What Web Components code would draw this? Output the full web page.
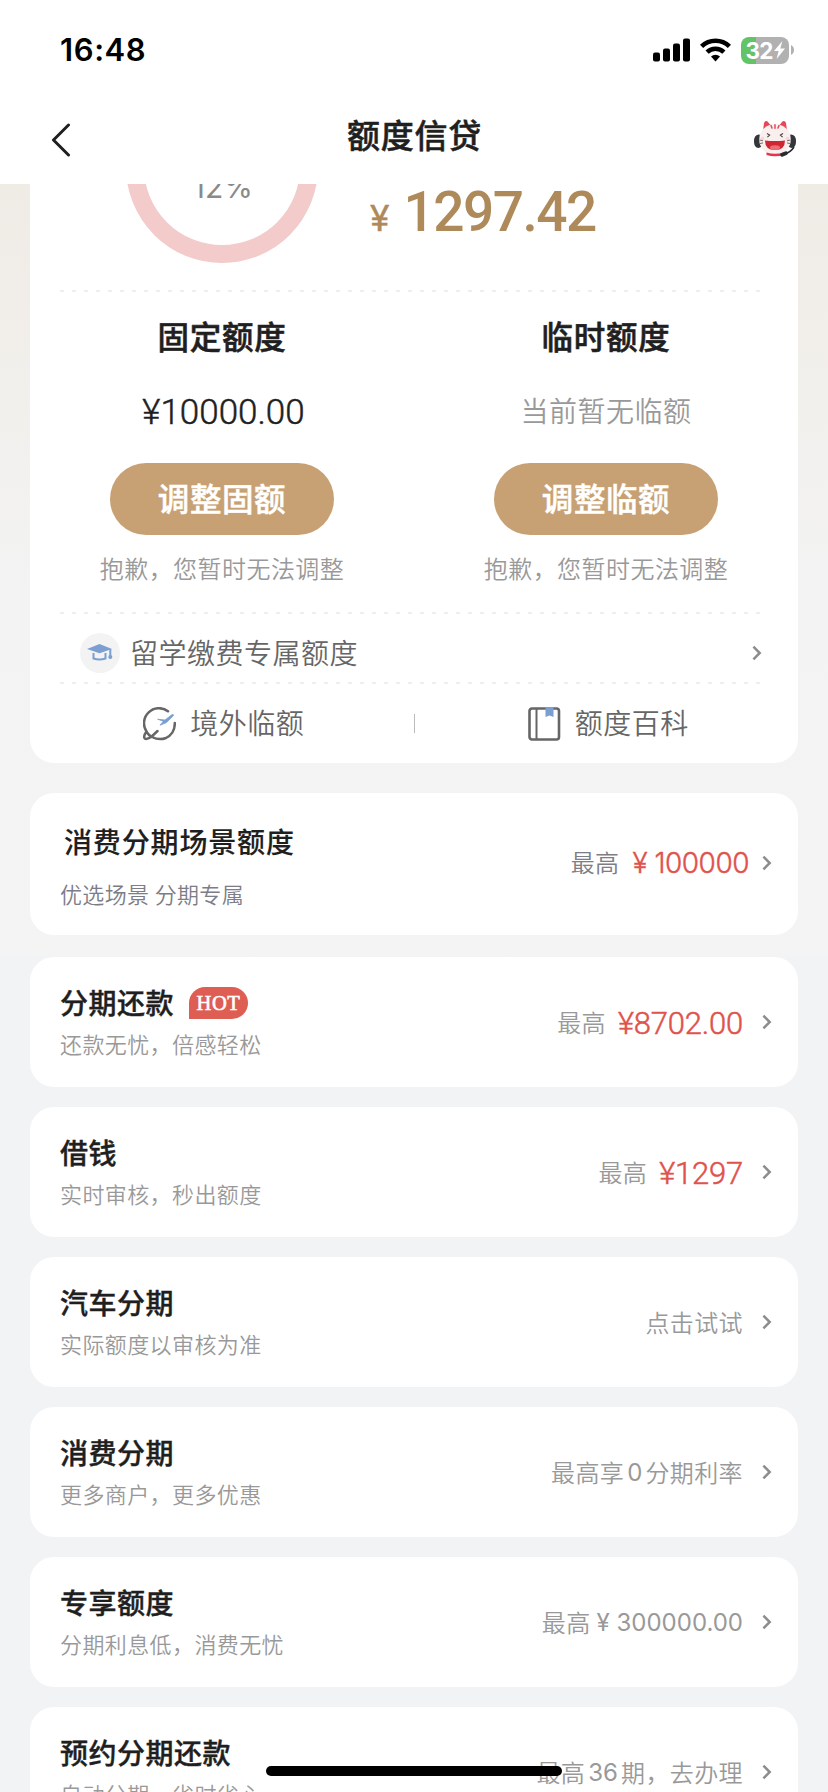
<!DOCTYPE html>
<html lang="zh-CN">
<head>
<meta charset="utf-8">
<title>额度信贷</title>
<style>
html,body{margin:0;padding:0}
body{width:828px;height:1792px;overflow:hidden;background:#f2f3f5;font-family:"Noto Sans CJK SC","Noto Sans",sans-serif;color:#1f1f1f}
</style>
</head>
<body>
<credit-app></credit-app>
<script>
const define=(name,html)=>{
  const t=document.createElement('template');t.innerHTML=html;
  customElements.define(name,class extends HTMLElement{
    constructor(){super();this.attachShadow({mode:'open'}).append(t.content.cloneNode(true));}
  });
};

define('chevron-icon',`<style>:host{display:block;width:10px;height:16px}svg{display:block}</style>
<svg width="10" height="16" viewBox="0 0 10 16" fill="none" stroke="#8d8d8d" stroke-width="2.5"><path d="M1.400 1.700 7.700 8 1.400 14.300"/></svg>`);

define('dash-line',`<style>:host{display:block;height:2px;margin:0 38px 0 30px;background:repeating-linear-gradient(90deg,#eee 0 4px,transparent 4px 12px)}</style>`);

define('status-bar',`<style>
:host{display:flex;height:100px;justify-content:space-between;align-items:center;padding:0 34px 0 60px;box-sizing:border-box}
.time{font:600 31px/36px Inter,sans-serif;color:#000;letter-spacing:.6px}
.icons{display:flex;align-items:center;gap:10px}
svg{display:block}
.bat{display:flex;align-items:center;gap:2px}
.body{width:48px;height:27px;border-radius:8px;background:linear-gradient(90deg,#62c466 15px,#b1b1b1 15px);display:flex;align-items:center;justify-content:center;gap:1px;color:#fff;font:700 22.5px/27px Inter,sans-serif;letter-spacing:-.8px}
</style>
<span class="time">16:48</span>
<div class="icons">
<svg width="37" height="24" viewBox="0 0 37 24"><rect y="14.5" width="7" height="9" rx="2"/><rect x="10" y="10.5" width="7" height="13" rx="2"/><rect x="20" y="5.5" width="7" height="18" rx="2"/><rect x="30" y=".5" width="7" height="23" rx="2"/></svg>
<svg width="31" height="24" viewBox="0 0 31 24"><g fill="none" stroke="#000" stroke-width="4.6"><path d="M1.6 8.4a20 20 0 0 1 27.8 0"/><path d="M7.1 14.1a12.2 12.2 0 0 1 16.8 0"/></g><path d="M11 18.6a6.6 6.6 0 0 1 9 0L15.5 23.4z"/></svg>
<div class="bat"><div class="body"><span>32</span><svg width="11" height="18" viewBox="0 0 11 18" fill="#fff"><path d="M8.4 0 0 10h4.6L2.6 18 11 7.6H6.3z"/></svg></div>
<svg width="3" height="10" viewBox="0 0 3 10" fill="#b1b1b1"><path d="M0 0q3 1.6 3 5t-3 5z"/></svg></div>
</div>`);

define('cat-icon',`<style>:host{display:block;width:44px;height:38px}svg{display:block}</style>
<svg width="44" height="38" viewBox="0 0 44 38">
<path d="M5.500 14.500Q1 15 1 21.500T5.500 28L8 27V15zM38.500 14.500Q43 15 43 21.500T38.500 28L36 27V15z" fill="#34363a"/>
<path d="M10 11 11 3Q12 .2 14.600 1.400L19 7zM34 11 33 3Q32 .2 29.400 1.400L25 7z" fill="#e8475a"/>
<ellipse cx="22" cy="19.500" rx="15.800" ry="15.500" fill="#f7f0ee"/>
<path d="M18 5.500l1 2.600M22 4.800v3.500M26 5.500l-1 2.600" stroke="#e8475a" stroke-width="1.500" stroke-linecap="round"/>
<path d="M41 27q-3 5-10 7.500" stroke="#26282b" stroke-width="1.500" fill="none"/>
<path d="M13.500 32.500q8.500 2.500 17 0v2.500q-8.500 2.400-17 0z" fill="#e6324a"/><rect x="27" y="32" width="8" height="4" rx="2" transform="rotate(-22 31 34)" fill="#2a2c2f"/>
<path d="m14 13.500 2.600 1.600-2.200 2M30 13.500l-2.600 1.600 2.200 2" fill="none" stroke="#4a3a3c" stroke-width="1.100"/>
<path d="M12 20.500q10 1 20 0 0 9.500-10 9.500t-10-9.500z" fill="#cf2634"/><ellipse cx="22" cy="27.600" rx="5" ry="2.400" fill="#ee6d74"/>
<circle cx="9.500" cy="18.500" r="1.800" fill="#fbd3d5"/><circle cx="34.500" cy="18.500" r="1.800" fill="#fbd3d5"/>
<path d="M6.500 20l3.500.8M7 23.500l3-.6M37.500 20l-3.500.8M37 23.500l-3-.6" stroke="#55484a" stroke-width=".8"/>
</svg>`);

define('nav-bar',`<style>
:host{display:grid;grid-template-columns:1fr auto 1fr;height:84px;align-items:center;padding:0 31px 10px 51px;box-sizing:border-box}
h1{margin:-6px 0 0 -19px;font-size:33px;line-height:46px;font-weight:500;letter-spacing:.7px;-webkit-text-stroke:.5px}
svg{display:block;margin-top:6px}cat-icon{justify-self:end;margin-top:4px}
</style>
<svg width="22" height="34" viewBox="0 0 22 34" fill="none" stroke="#1f1f1f" stroke-width="3" stroke-linecap="round" stroke-linejoin="round"><path d="M17.500 2 2.500 17l15 15"/></svg>
<h1><slot></slot></h1><cat-icon></cat-icon>`);

define('usage-ring',`<style>
:host{display:flex;width:192px;height:192px;box-sizing:border-box;border:18px solid #f2cbca;border-radius:50%;align-items:center;justify-content:center;font:400 30px/40px Inter,sans-serif;color:#8a8a8a;letter-spacing:.2px;padding:39px 0 0 2px}
</style><slot></slot>`);

define('limit-column',`<style>
:host{display:flex;flex:1;flex-direction:column;align-items:center;height:320px;box-sizing:border-box;padding-top:20px}
.title{font-size:31.500px;line-height:46px;font-weight:500;letter-spacing:.7px;-webkit-text-stroke:.6px}
.value{height:50px;margin-top:27px;line-height:50px;display:flex;align-items:center}
.btn{width:224px;height:72px;border-radius:36px;background:#c7a174;color:#fff;font-size:31.500px;font-weight:500;line-height:69px;text-align:center;margin-top:28px;letter-spacing:.6px;-webkit-text-stroke:.5px}
.note{margin-top:15px;font-size:24px;line-height:36px;color:#999;letter-spacing:.45px;font-weight:350}
</style>
<div class="title"><slot name="title"></slot></div><div class="value"><slot></slot></div><div class="btn"><slot name="action"></slot></div><div class="note">抱歉，您暂时无法调整</div>`);

define('limit-card',`<style>
:host{display:block;background:#fff;border-radius:0 0 24px 24px;margin:-124px 30px 0;height:703px}
.top{height:230px;display:flex;padding-left:96px;box-sizing:border-box}
usage-ring{margin-top:11px;flex:none}
.sum{display:flex;align-items:baseline;margin:119px 0 0 52px;color:#ae8a5b;line-height:66px;height:66px}
.yen{font:400 37px/50px Roboto,sans-serif;-webkit-text-stroke:.3px}
.num{font:500 55px/66px Roboto,sans-serif;margin-left:14px;letter-spacing:-1.500px}
.cols{display:flex}
.study{height:68px;display:flex;align-items:center;padding:9px 36px 0 50px;box-sizing:border-box}
.round{width:40px;height:40px;border-radius:50%;background:#f3f3f4;display:flex;align-items:center;justify-content:center}
svg{display:block}
.txt{font-size:28px;line-height:40px;color:#666;letter-spacing:.5px;font-weight:350;margin-top:-2px}
.study .txt{flex:1;margin-left:10px}
.foot{height:79px;display:flex;align-items:center}
.foot .txt{margin-top:-4px}
.half{flex:1;display:flex;justify-content:center;align-items:center;gap:14px;padding-left:4px}
.sep{width:1px;height:19px;background:#bbb}
.v1{font:300 35px/50px Roboto,sans-serif;letter-spacing:0;padding:5px 0 0 3px;-webkit-text-stroke:.5px}
.v2{font-size:28px;color:#999;letter-spacing:.5px;font-weight:350;margin-top:-1px}
</style>
<div class="top"><usage-ring>12%</usage-ring><div class="sum"><span class="yen">¥</span><span class="num">1297.42</span></div></div>
<dash-line></dash-line>
<div class="cols">
<limit-column><span slot="title">固定额度</span><span class="v1">¥10000.00</span><span slot="action">调整固额</span></limit-column>
<limit-column><span slot="title">临时额度</span><span class="v2">当前暂无临额</span><span slot="action">调整临额</span></limit-column>
</div>
<dash-line></dash-line>
<div class="study"><span class="round"><svg width="26" height="18" viewBox="0 0 26 18"><path d="M0 5 12.500 0 25 5 12.500 9.300z" fill="#7b9fd0"/><path d="M6.500 9v5.500q6 2 12 0V9M23.300 5v8" fill="none" stroke="#7b9fd0" stroke-width="2"/><circle cx="23.300" cy="13" r="2" fill="#7b9fd0"/></svg></span><span class="txt">留学缴费专属额度</span><chevron-icon></chevron-icon></div>
<dash-line></dash-line>
<div class="foot">
<div class="half"><svg width="33" height="34" viewBox="0 0 33 34" fill="none" stroke="#666" stroke-width="2.500" stroke-linecap="round"><path d="M25 4.200A15 15 0 0 0 3.500 24.500Q0 29.500 1.800 31.500 4 33 9 29.200L14.500 24"/><path d="M4 25.500q2 3.200 5 4.500Q16 33.600 23 31 32 26.500 31.800 16"/><path d="M15 12.300l7 .7 6.800-5.200q1.800-.8 1.800.6L23.500 15.600l-6.500 2.600 3.200-3.800z" fill="#7b9fd0" stroke="#7b9fd0" stroke-width=".8"/></svg><span class="txt">境外临额</span></div>
<span class="sep"></span>
<div class="half"><svg width="33" height="34" viewBox="0 0 33 34"><rect x="1.500" y="1.500" width="29.500" height="31" rx="2.500" fill="none" stroke="#666" stroke-width="2.600"/><path d="M8.500 1.500v31" stroke="#666" stroke-width="2"/><path d="M17.500 0h8v10l-4-1.500-4 1.500z" fill="#7b9fd0"/></svg><span class="txt">额度百科</span></div>
</div>`);

define('hot-badge',`<style>:host{display:block;width:59px;height:32px;background:#df5e54;border-radius:16px 16px 16px 0;color:#fff;font:400 20.500px/33px "Liberation Serif",serif;text-align:center;letter-spacing:.6px;-webkit-text-stroke:.6px #fff}</style><slot></slot>`);

define('offer-row',`<style>
:host{display:flex;height:130px;box-sizing:border-box;background:#fff;border-radius:24px;margin:0 30px 20px;padding:25px 26px 0 30px;justify-content:space-between}
.title{display:flex;align-items:center;gap:15px;font-size:28px;font-weight:500;line-height:38px;height:40px;letter-spacing:.5px;-webkit-text-stroke:.4px}
.title ::slotted(hot-badge){margin-top:1px;letter-spacing:.6px}
.sub{font-size:22px;line-height:32px;margin-top:5px;color:#999;letter-spacing:.4px;font-weight:350}
.right{display:flex;align-items:center;height:40px;margin-top:19px;color:#999;font-size:24px;letter-spacing:.4px;font-weight:350}
chevron-icon{margin-left:19px;margin-top:2px}
:host([scene]){height:142px;margin-bottom:22px;margin-top:30px;padding-top:28px}
:host([scene]) .title{margin-left:4px;letter-spacing:.85px;-webkit-text-stroke:.1px}
:host([scene]) .sub{margin-top:16px;color:#7d7d87;letter-spacing:.35px}
:host([scene]) .right{margin-top:20px;color:#7d7d87}
:host([scene]) chevron-icon{margin-left:13px;margin-top:3px}
</style>
<div><div class="title"><slot name="title"></slot><slot name="badge"></slot></div><div class="sub"><slot name="sub"></slot></div></div>
<div class="right"><slot></slot><chevron-icon></chevron-icon></div>`);

define('money-value',`<style>:host{display:block;color:#e0524c;font:300 31px/40px Roboto,sans-serif;letter-spacing:-.2px;margin-left:12px;padding-top:5px;-webkit-text-stroke:.5px}</style><slot></slot>`);
define('latin-run',`<style>:host{display:block;font:400 24px/40px Inter,sans-serif;letter-spacing:0;padding-top:4px}</style><slot></slot>`);
define('home-indicator',`<style>:host{display:block;position:absolute;left:266px;top:1766px;width:296px;height:10px;border-radius:5px;background:#000}</style>`);

define('credit-app',`<style>
:host{display:block;position:relative;width:828px;height:1792px;overflow:hidden}
header{background:#fff;height:184px}
main{height:1608px;overflow:hidden;display:flow-root;background:linear-gradient(#efebe5 0,#f1eee9 120px,#f3f3f3 400px,#f4f4f4 770px,#f2f3f5 774px)}
money-value.big{font:300 28px/40px Inter,sans-serif;letter-spacing:-.5px;margin-left:13px;padding-top:4px;-webkit-text-stroke:.4px}
</style>
<header><status-bar></status-bar><nav-bar>额度信贷</nav-bar></header>
<main>
<limit-card></limit-card>
<offer-row scene><span slot="title">消费分期场景额度</span><span slot="sub">优选场景 分期专属</span><span>最高</span><money-value class="big">¥ 100000</money-value></offer-row>
<offer-row><span slot="title">分期还款</span><hot-badge slot="badge">HOT</hot-badge><span slot="sub">还款无忧，倍感轻松</span><span>最高</span><money-value>¥8702.00</money-value></offer-row>
<offer-row><span slot="title">借钱</span><span slot="sub">实时审核，秒出额度</span><span>最高</span><money-value>¥1297</money-value></offer-row>
<offer-row><span slot="title">汽车分期</span><span slot="sub">实际额度以审核为准</span><span>点击试试</span></offer-row>
<offer-row><span slot="title">消费分期</span><span slot="sub">更多商户，更多优惠</span><span>最高享</span><latin-run style="margin:0 3px">0</latin-run><span>分期利率</span></offer-row>
<offer-row><span slot="title">专享额度</span><span slot="sub">分期利息低，消费无忧</span><span>最高</span><latin-run style="margin-left:6px">¥ 300000.00</latin-run></offer-row>
<offer-row><span slot="title">预约分期还款</span><span slot="sub">自动分期，省时省心</span><span>最高</span><latin-run style="margin:0 3px">36</latin-run><span>期，去办理</span></offer-row>
</main>
<home-indicator></home-indicator>`);
</script>
</body>
</html>
